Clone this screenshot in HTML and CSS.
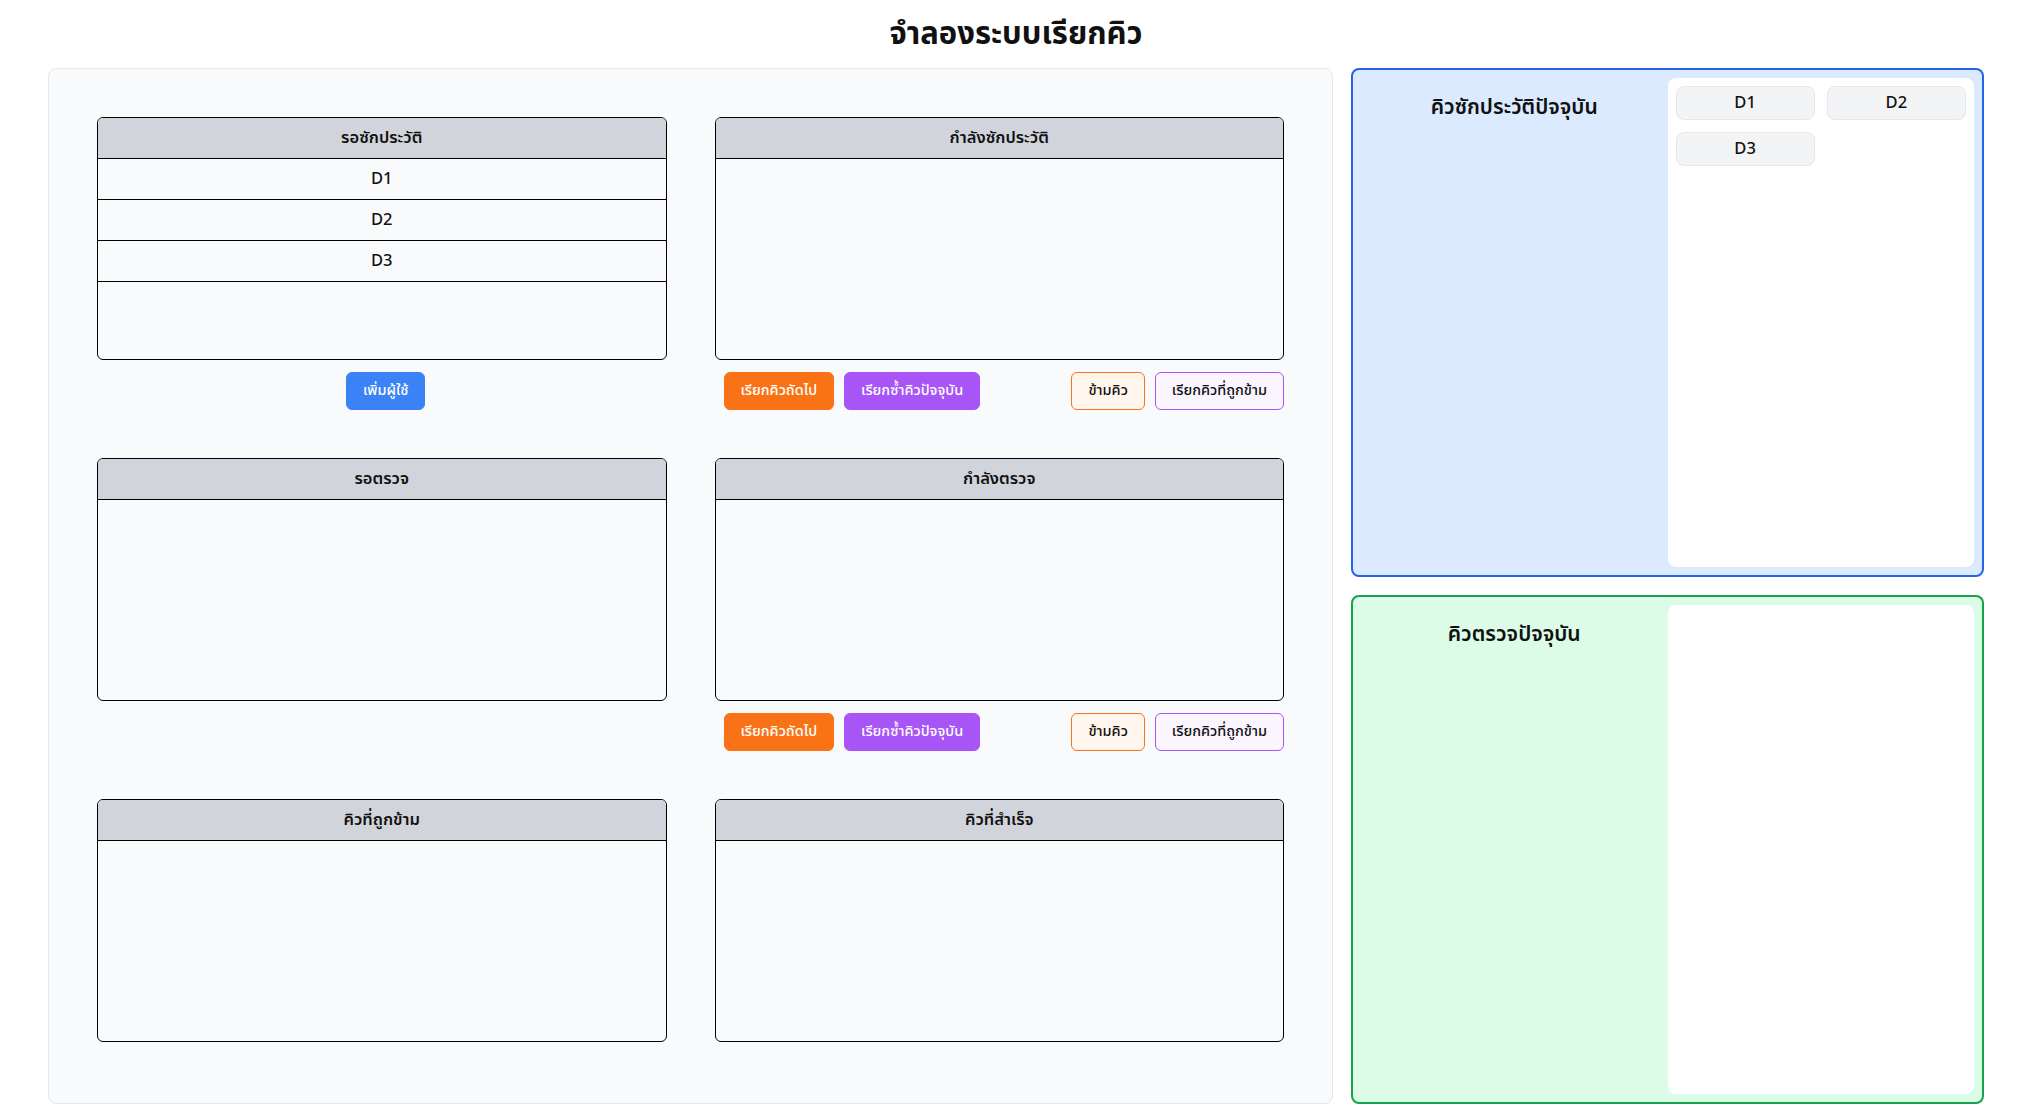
FILE: index.html
```html
<!DOCTYPE html>
<html lang="th">
<head>
<meta charset="utf-8">
<title>จำลองระบบเรียกคิว</title>
<link rel="stylesheet" href="styles.css">
</head>
<body>
<div class="page">
  <h1 class="title">จำลองระบบเรียกคิว</h1>
  <div class="main">
    <section class="board">
      <div class="grid">
        <div class="cell">
          <div class="qbox">
            <div class="qhead">รอซักประวัติ</div>
            <div class="qbody">
              <div class="qrow">D1</div>
              <div class="qrow">D2</div>
              <div class="qrow">D3</div>
            </div>
          </div>
          <div class="actions actions-center">
            <button class="btn btn-blue">เพิ่มผู้ใช้</button>
          </div>
        </div>
        <div class="cell">
          <div class="qbox">
            <div class="qhead">กำลังซักประวัติ</div>
            <div class="qbody"></div>
          </div>
          <div class="actions">
            <div class="btn-group btn-group-left">
              <button class="btn btn-orange">เรียกคิวถัดไป</button>
              <button class="btn btn-purple">เรียกซ้ำคิวปัจจุบัน</button>
            </div>
            <div class="btn-group">
              <button class="btn btn-skip">ข้ามคิว</button>
              <button class="btn btn-recall">เรียกคิวที่ถูกข้าม</button>
            </div>
          </div>
        </div>
        <div class="cell">
          <div class="qbox">
            <div class="qhead">รอตรวจ</div>
            <div class="qbody"></div>
          </div>
        </div>
        <div class="cell">
          <div class="qbox">
            <div class="qhead">กำลังตรวจ</div>
            <div class="qbody"></div>
          </div>
          <div class="actions">
            <div class="btn-group btn-group-left">
              <button class="btn btn-orange">เรียกคิวถัดไป</button>
              <button class="btn btn-purple">เรียกซ้ำคิวปัจจุบัน</button>
            </div>
            <div class="btn-group">
              <button class="btn btn-skip">ข้ามคิว</button>
              <button class="btn btn-recall">เรียกคิวที่ถูกข้าม</button>
            </div>
          </div>
        </div>
        <div class="cell">
          <div class="qbox">
            <div class="qhead">คิวที่ถูกข้าม</div>
            <div class="qbody"></div>
          </div>
        </div>
        <div class="cell">
          <div class="qbox">
            <div class="qhead">คิวที่สำเร็จ</div>
            <div class="qbody"></div>
          </div>
        </div>
      </div>
    </section>
    <aside class="side">
      <div class="current current-blue">
        <div class="current-label">คิวซักประวัติปัจจุบัน</div>
        <div class="current-wrap">
          <div class="current-list">
            <div class="chip">D1</div>
            <div class="chip">D2</div>
            <div class="chip">D3</div>
          </div>
        </div>
      </div>
      <div class="current current-green">
        <div class="current-label">คิวตรวจปัจจุบัน</div>
        <div class="current-wrap">
          <div class="current-list"></div>
        </div>
      </div>
    </aside>
  </div>
</div>
</body>
</html>
```

FILE: styles.css
```css
* { box-sizing: border-box; }
html, body { margin: 0; padding: 0; }
body {
  font-family: "Noto Sans Thai", "Noto Sans", sans-serif;
  color: #111;
  background: #fff;
}
.page {
  height: 100vh;
  display: flex;
  flex-direction: column;
  padding: 0 49px 1px 48px;
}
.title {
  margin: 0 0 15px;
  padding-top: 17px;
  font-size: 31px;
  line-height: 36px;
  font-weight: 700;
  text-align: center;
}
.main {
  flex: 1;
  min-height: 0;
  display: grid;
  grid-template-columns: minmax(0, 1fr) 633px;
  gap: 18px;
}
.board {
  background: #f9fafb;
  border: 1px solid #e5e7eb;
  border-radius: 8px;
  padding: 48px;
}
.grid {
  display: grid;
  grid-template-columns: 1fr 1fr;
  gap: 48px;
  align-items: start;
}
.qbox {
  border: 1px solid #000;
  border-radius: 6px;
  overflow: hidden;
}
.qhead {
  background: #d1d5db;
  border-bottom: 1px solid #000;
  padding: 8px;
  text-align: center;
  font-size: 16.5px;
  line-height: 24px;
  font-weight: 600;
}
.qbody { min-height: 200px; }
.qrow {
  padding: 8px;
  text-align: center;
  font-size: 16.5px;
  line-height: 24px;
  font-weight: 500;
  border-bottom: 1px solid #000;
}
.actions {
  margin-top: 12px;
  display: flex;
  justify-content: space-between;
}
.actions-center { justify-content: center; padding-left: 8px; }
.btn-group { display: flex; gap: 10px; }
.btn-group-left { margin-left: 9px; }
.btn {
  font-family: inherit;
  font-size: 14.5px;
  line-height: 20px;
  font-weight: 500;
  padding: 8px 16px;
  border-radius: 6px;
  border: 1px solid transparent;
  color: #111;
  background: transparent;
}
.btn-blue { background: #3b82f6; color: #fff; border-color: #3b82f6; }
.btn-orange { background: #f97316; color: #fff; border-color: #f97316; }
.btn-purple { background: #a855f7; color: #fff; border-color: #a855f7; }
.btn-skip { background: #fff7ed; border-color: #f97316; }
.btn-recall { background: #faf5ff; border-color: #a855f7; }
.side {
  display: flex;
  flex-direction: column;
  gap: 18px;
}
.current {
  flex: 1;
  display: grid;
  grid-template-columns: 1fr 1fr;
  border: 2px solid;
  border-radius: 8px;
}
.current-blue { background: #dbeafe; border-color: #2563eb; }
.current-green { background: #dcfce7; border-color: #16a34a; }
.current-label {
  padding: 24px 0 0 8px;
  text-align: center;
  font-size: 21px;
  line-height: 28px;
  font-weight: 600;
}
.current-wrap { padding: 8px 8px 8px 0; }
.current-list {
  height: 100%;
  background: #fff;
  border-radius: 8px;
  padding: 8px;
  display: grid;
  grid-template-columns: 1fr 1fr;
  gap: 12px;
  align-content: start;
}
.chip {
  background: #f3f4f6;
  border: 1px solid #e5e7eb;
  border-radius: 8px;
  padding: 4px;
  text-align: center;
  font-size: 16.5px;
  line-height: 24px;
  font-weight: 500;
}
```
